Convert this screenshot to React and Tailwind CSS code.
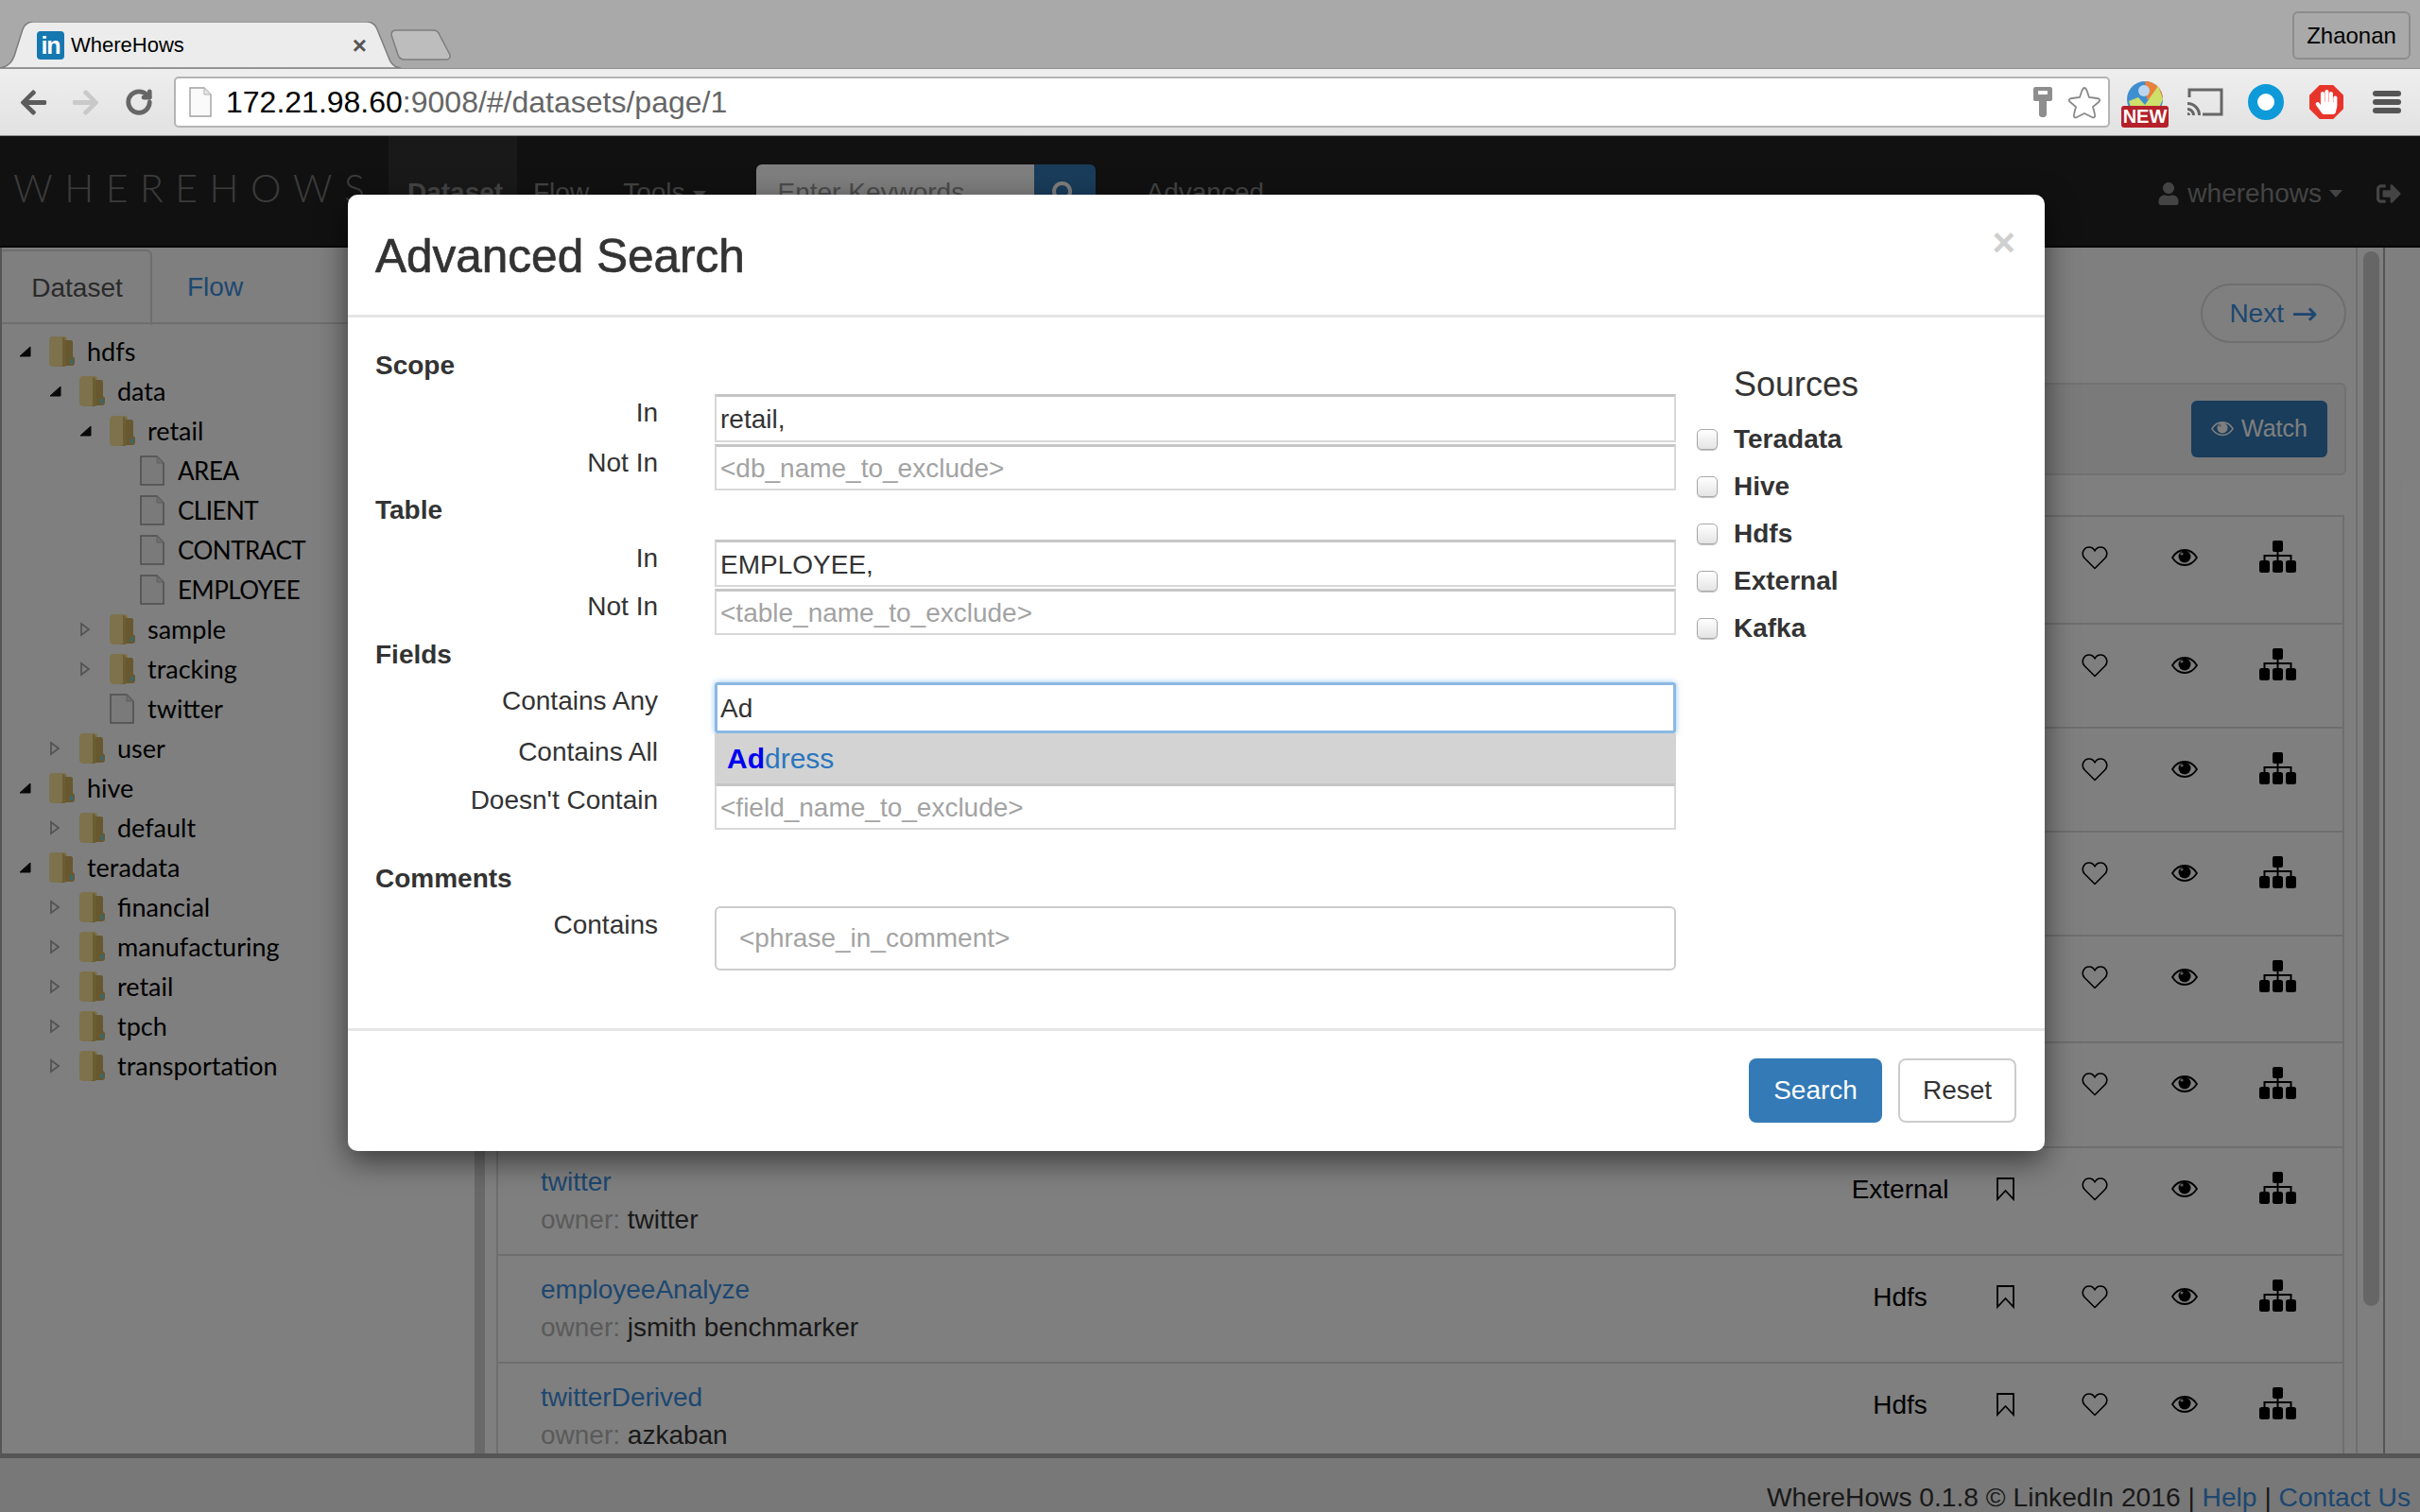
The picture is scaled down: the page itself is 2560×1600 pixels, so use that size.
import React from 'react';
import { RotateCw } from 'lucide-react';
import { FaArrowLeft, FaArrowRight, FaHandPaper, FaSearch, FaSignOutAlt, FaUser } from 'react-icons/fa';

const tree = [
  { level: 0, kind: 'open', name: 'hdfs' },
  { level: 1, kind: 'open', name: 'data' },
  { level: 2, kind: 'open', name: 'retail' },
  { level: 3, kind: 'file', name: 'AREA' },
  { level: 3, kind: 'file', name: 'CLIENT' },
  { level: 3, kind: 'file', name: 'CONTRACT' },
  { level: 3, kind: 'file', name: 'EMPLOYEE' },
  { level: 2, kind: 'closed', name: 'sample' },
  { level: 2, kind: 'closed', name: 'tracking' },
  { level: 2, kind: 'file', name: 'twitter' },
  { level: 1, kind: 'closed', name: 'user' },
  { level: 0, kind: 'open', name: 'hive' },
  { level: 1, kind: 'closed', name: 'default' },
  { level: 0, kind: 'open', name: 'teradata' },
  { level: 1, kind: 'closed', name: 'financial' },
  { level: 1, kind: 'closed', name: 'manufacturing' },
  { level: 1, kind: 'closed', name: 'retail' },
  { level: 1, kind: 'closed', name: 'tpch' },
  { level: 1, kind: 'closed', name: 'transportation' },
];

const rows = [
  { h: 'h-[114px]' },
  { h: 'h-[110px]' },
  { h: 'h-[110px]' },
  { h: 'h-[110px]' },
  { h: 'h-[113px]' },
  { h: 'h-[111px]' },
  { h: 'h-[114px]', name: 'twitter', owner: 'twitter', type: 'External' },
  { h: 'h-[114px]', name: 'employeeAnalyze', owner: 'jsmith benchmarker', type: 'Hdfs' },
  { h: 'h-[114px]', name: 'twitterDerived', owner: 'azkaban', type: 'Hdfs' },
];

const sources = ['Teradata', 'Hive', 'Hdfs', 'External', 'Kafka'];

const Folder = () => (
  <svg width="27" height="32" viewBox="0 0 27 32" className="shrink-0">
    <path d="M4 0h12c2 0 3 1 3 3v26c0 2-1 3-3 3H5c-3 0-5-1-5-4V5c0-3 1-5 4-5z" fill="#fbe499" />
    <path d="M17 4h6c1 0 2 1 2 2v15l2 2v5c0 2-1 3-3 3h-7l-1 1H9c4 0 8-1 8-4z" fill="#cfb161" />
    <path d="M14 1c2 0 3 1 3 3v24c0 2-1 3-3 3z" fill="#d8bc68" />
    <rect x="22" y="24" width="3" height="5" fill="#6fd0dc" />
  </svg>
);

const FileIcon = () => (
  <svg width="26" height="32" viewBox="0 0 26 32" className="shrink-0">
    <path d="M1 1h17l7 7v23H1z" fill="#f4f4f4" stroke="#9a9a9a" strokeWidth="1.5" />
    <path d="M18 1v7h7" fill="#dcdcdc" stroke="#bdbdbd" strokeWidth="1" />
  </svg>
);

const TreeArrow = ({ kind }) => {
  if (kind === 'file') return <span className="w-[32px] shrink-0" />;
  if (kind === 'open') {
    return (
      <svg width="32" height="14" viewBox="0 0 32 14" className="shrink-0">
        <path d="M1 12L12 2v10z" fill="#111" stroke="#111" strokeLinejoin="round" />
      </svg>
    );
  }
  return (
    <svg width="32" height="16" viewBox="0 0 32 16" className="shrink-0">
      <path d="M2 2l8 6-8 6z" fill="none" stroke="#a8a8a8" strokeWidth="1.8" />
    </svg>
  );
};

const Bookmark = () => (
  <svg width="19" height="25" viewBox="0 0 19 25" className="shrink-0">
    <path d="M1 1h17v22l-8.5-9L1 23z" fill="none" stroke="#000" strokeWidth="1.8" />
  </svg>
);

const Heart = () => (
  <svg width="28" height="25" viewBox="0 0 28 25" className="shrink-0">
    <path d="M14 23.5L3 12.5C-1 7.5 2.5 1 8 1c2.8 0 4.8 1.5 6 4 1.2-2.5 3.2-4 6-4 5.500 0 9 6.500 5 11.500z" fill="none" stroke="#000" strokeWidth="1.6" strokeLinejoin="round" />
  </svg>
);

const Eye = ({ color = '#000', size = 28 }) => (
  <svg width={size} height={(size * 18) / 28} viewBox="0 0 28 18" className="shrink-0">
    <path d="M1 9C4.500 3.500 9 1 14 1s9.500 2.500 13 8c-3.500 5.500-8 8-13 8S4.500 14.500 1 9z" fill="none" stroke={color} strokeWidth="1.8" />
    <circle cx="14" cy="8" r="6.500" fill={color} />
    <circle cx="11" cy="5" r="1.600" fill="#bbb" />
  </svg>
);

const Sitemap = () => (
  <svg width="39" height="34" viewBox="0 0 39 34" className="shrink-0">
    <rect x="14" y="0" width="11" height="12" rx="2" />
    <path d="M19.500 10v12M5.500 23v-7h28v7" fill="none" stroke="#000" strokeWidth="2" />
    <rect x="0" y="21" width="11" height="13" rx="2.500" />
    <rect x="14" y="21" width="11" height="13" rx="2.500" />
    <rect x="28" y="21" width="11" height="13" rx="2.500" />
  </svg>
);

const Caret = ({ className }) => <span className={`w-0 h-0 border-x-[7px] border-x-transparent border-t-[8px] ${className}`} />;

const BrowserChrome = () => (
  <div className="shrink-0">
    <div className="h-[72px] bg-[#a9a9a9] flex items-end relative">
      <div className="relative w-[424px] h-[49px] flex items-center pl-[39px] pr-[36px] shrink-0">
        <svg width="424" height="49" viewBox="0 0 424 49" className="absolute left-0 top-0">
          <path d="M0 49C10 47 14 42 17 30L24 8C26 3 29 0 35 0H388C394 0 397 3 399 8L412 40C414 45 417 48 424 49z" fill="#ececec" stroke="#7d7d7d" strokeWidth="1.5" />
        </svg>
        <span className="relative w-[29px] h-[30px] rounded-[4px] bg-[#1578b0] text-white font-bold text-[25px] leading-[30px] text-center tracking-[-1px]">in</span>
        <span className="relative ml-[7px] text-[22px] text-black flex-1">WhereHows</span>
        <span className="relative text-[#555] text-[26px] font-bold leading-none">×</span>
      </div>
      <svg width="66" height="33" viewBox="0 0 66 33" className="-ml-[12px] mb-[8px] shrink-0">
        <path d="M2 6C2 3 4 1 7 1H46C50 1 52 3 53 6L64 27C65 30 63 32 60 32H16C12 32 10 30 9 27z" fill="#bdbdbd" stroke="#7d7d7d" strokeWidth="1.5" />
      </svg>
      <div className="absolute right-[10px] top-[12px] w-[125px] h-[51px] rounded-[6px] border-2 border-[#8c8c8c] flex items-center justify-center text-[24px] text-black">Zhaonan</div>
    </div>
    <div className="h-[72px] bg-gradient-to-b from-[#eeeeee] to-[#e2e2e2] border-y border-[#8f8f8f] flex items-center">
      <FaArrowLeft className="ml-[20px] text-[#5c5c5c] shrink-0" size={31} />
      <FaArrowRight className="ml-[24px] text-[#c9c9c9] shrink-0" size={31} />
      <RotateCw className="ml-[26px] text-[#666] shrink-0" size={30} strokeWidth={3.8} />
      <div className="ml-[22px] w-[2048px] h-[54px] bg-white border-2 border-[#b4b4b4] rounded-[5px] flex items-center shrink-0">
        <svg width="24" height="32" viewBox="0 0 24 32" className="ml-[14px] shrink-0">
          <path d="M1 1h15l7 7v23H1z" fill="#fafafa" stroke="#a0a0a0" strokeWidth="1.400" />
          <path d="M16 1v7h7" fill="#e6e6e6" stroke="#b0b0b0" />
        </svg>
        <span className="ml-[15px] text-[32px] text-black whitespace-nowrap">172.21.98.60<span className="text-[#666]">:9008/#/datasets/page/1</span></span>
        <svg width="20" height="32" viewBox="0 0 20 32" className="ml-auto shrink-0">
          <path d="M2 0h16c1 0 2 1 2 2v11c0 1-1 2-2 2h-4v15l-2 2H8l-2-2V15H2c-1 0-2-1-2-2V2C0 1 1 0 2 0z" fill="#8e8e8e" />
          <rect x="5" y="4" width="10" height="4" rx="1" fill="#fff" />
        </svg>
        <svg width="36" height="35" viewBox="0 0 36 35" className="ml-[16px] mr-[7px] shrink-0">
          <path d="M18 2c1 0 2 1 3 4l2 6 8 1c4 .5 4 2 2 4l-6 5 2 8c1 3-1 4-3 3l-8-4-8 4c-2 1-4 0-3-3l2-8-6-5c-2-2-2-3.500 2-4l8-1 2-6c1-3 2-4 3-4z" fill="#fff" stroke="#8a8a8a" strokeWidth="1.800" />
        </svg>
      </div>
      <div className="relative ml-[12px] w-[50px] h-[48px] shrink-0 mt-[6px]">
        <svg width="40" height="40" viewBox="0 0 40 40" className="absolute left-[5px] -top-[2px]">
          <circle cx="20" cy="20" r="19" fill="#3f8fd0" />
          <path d="M20 1a19 19 0 0 1 19 19H22z" fill="#e8813a" />
          <path d="M3 22l10-4 7 8 14-20 5 14-8 18H8z" fill="#cfe06a" />
          <circle cx="19" cy="11" r="6" fill="#bcd6f0" />
        </svg>
        <span className="absolute left-0 bottom-0 w-[50px] h-[23px] rounded-[3px] bg-[#b5202a] text-white font-bold text-[20px] leading-[23px] text-center">NEW</span>
      </div>
      <svg width="38" height="30" viewBox="0 0 38 30" className="ml-[20px] shrink-0">
        <path d="M2 10V2h34v26H16" fill="none" stroke="#666" strokeWidth="3" />
        <path d="M0 15a14 14 0 0 1 14 14h-3A11 11 0 0 0 0 18zM0 21a8 8 0 0 1 8 8H5a5 5 0 0 0-5-5zM0 26a3 3 0 0 1 3 3H0z" fill="#666" />
      </svg>
      <span className="ml-[26px] w-[38px] h-[38px] rounded-full border-[10px] border-[#0e9ad8] bg-white shrink-0" />
      <span className="ml-[27px] w-[36px] h-[36px] bg-[#e8352c] flex items-center justify-center shrink-0 [clip-path:polygon(30%_0,70%_0,100%_30%,100%_70%,70%_100%,30%_100%,0_70%,0_30%)]">
        <FaHandPaper className="text-white" size={26} />
      </span>
      <div className="ml-[31px] w-[30px] flex flex-col gap-[3px] shrink-0">
        <span className="h-[6px] rounded-[3px] bg-[#555]" />
        <span className="h-[6px] rounded-[3px] bg-[#555]" />
        <span className="h-[6px] rounded-[3px] bg-[#555]" />
      </div>
    </div>
  </div>
);

const Navbar = () => (
  <div className="h-[118px] shrink-0 bg-[#222] border-b-2 border-black flex items-start text-[28px] text-[#888]">
    <span className="ml-[14px] w-[397px] mt-[33px] text-[41px] leading-[44px] tracking-[12.500px] text-[#777] font-light font-['Lato',sans-serif] whitespace-nowrap">WHEREHOWS</span>
    <span className="w-[136px] h-[118px] bg-[#333] pl-[20px] pt-[44px] font-bold leading-[32px]">Dataset</span>
    <span className="ml-[17px] pt-[44px] leading-[32px]">Flow</span>
    <span className="ml-[36px] pt-[44px] leading-[32px] flex items-center gap-[8px]">Tools<Caret className="border-t-[#888] mt-[4px]" /></span>
    <div className="ml-[53px] mt-[30px] flex h-[56px] shrink-0">
      <div className="w-[294px] bg-white rounded-l-[6px] pl-[23px] pt-[14px] leading-[32px] text-[#999]">Enter Keywords</div>
      <div className="w-[65px] bg-[#337ab7] rounded-r-[6px] flex justify-center pt-[18px]">
        <FaSearch className="text-white" size={26} />
      </div>
    </div>
    <span className="ml-[54px] pt-[44px] leading-[32px]">Advanced</span>
    <div className="ml-auto mr-[20px] pt-[45px] flex items-center leading-[32px]">
      <FaUser size={24} />
      <span className="ml-[8px]">wherehows</span>
      <Caret className="ml-[8px] border-t-[#888]" />
      <FaSignOutAlt className="ml-[36px]" size={26} />
    </div>
  </div>
);

const Sidebar = () => (
  <div className="w-[502px] shrink-0 border-l-2 border-[#aaa] bg-white">
    <div className="h-[81px] pt-[2px] flex border-b-2 border-[#ddd] text-[28px]">
      <div className="w-[159px] h-[80px] pl-[2px] border-r-2 border-t-2 border-[#ddd] rounded-tr-[6px] flex items-center justify-center text-[#555]">Dataset</div>
      <div className="ml-[37px] h-[80px] flex items-center text-[#3a8ee0]">Flow</div>
    </div>
    <div className="pt-[8px] pl-[18px]">
      {tree.map((item, i) => (
        <div key={i} className="h-[42px] flex items-center" style={{ marginLeft: item.level * 32 }}>
          <TreeArrow kind={item.kind} />
          {item.kind === 'file' ? <FileIcon /> : <Folder />}
          <span className={`${item.kind === 'file' ? 'ml-[14px]' : 'ml-[13px]'} ${item.level === 3 ? 'text-[26px] tracking-[-0.5px]' : 'text-[27px]'} text-black font-['Lato',sans-serif] whitespace-nowrap`}>{item.name}</span>
        </div>
      ))}
    </div>
  </div>
);

const DatasetRow = ({ row }) => (
  <div className={`${row.h} shrink-0 border-b-2 border-[#ddd] pl-[45px] flex items-start text-[28px]`}>
    <div className="w-[1366px] pt-[18px]">
      <div className="h-[36px] leading-[36px] text-[#3a8ee0]">{row.name}</div>
      <div className="mt-[4px] h-[36px] leading-[36px] text-[#333]">
        {row.owner && <span className="text-[#b4b4b4]">owner: </span>}
        {row.owner}
      </div>
    </div>
    <div className="w-[144px] pt-[26px] leading-[36px] text-center text-black">{row.type}</div>
    <div className="w-[87px] pt-[31px] flex justify-center pr-[8px]"><Bookmark /></div>
    <div className="w-[94px] pt-[31px] flex justify-center"><Heart /></div>
    <div className="w-[96px] pt-[34px] flex justify-center"><Eye /></div>
    <div className="w-[100px] pt-[25px] flex justify-center"><Sitemap /></div>
  </div>
);

const Main = () => (
  <div className="flex-1 flex min-w-0 bg-white">
    <div className="w-[11px] bg-[#d2d2d2] shrink-0" />
    <div className="w-[12px] shrink-0" />
    <div className="w-[1957px] shrink-0 h-full overflow-hidden">
      <div className="pt-[38px] flex justify-end">
        <div className="w-[154px] h-[63px] rounded-full border-2 border-[#ddd] flex items-center justify-center gap-[8px] text-[28px] text-[#3a8ee0]">
          Next<span className="text-[33px] leading-[32px] font-['DejaVu_Sans',sans-serif]">→</span>
        </div>
      </div>
      <div className="mt-[42px] h-[98px] rounded-[6px] border-2 border-[#e3e3e3] bg-[#f5f5f5] flex items-start justify-end pt-[17px] pr-[18px]">
        <div className="w-[144px] h-[60px] rounded-[6px] bg-[#337ab7] flex items-center justify-center gap-[8px] text-[25px] text-white">
          <Eye color="#fff" size={24} />
          Watch
        </div>
      </div>
      <div className="mt-[42px] mr-[2px] border-x-2 border-t-2 border-[#ddd] flex flex-col">
        {rows.map((row, i) => <DatasetRow key={i} row={row} />)}
      </div>
    </div>
    <div className="w-[10px] shrink-0" />
    <div className="w-[31px] shrink-0 border-l-2 border-[#ddd] border-r-2 border-r-[#aaa] pl-[6px] pt-[4px]">
      <div className="w-[17px] h-[1116px] rounded-full bg-[#cdcdcd]" />
    </div>
  </div>
);

const FieldRow = ({ label, height, gap, labelClass, children }) => (
  <div className={`flex ${height} ${gap || ''}`}>
    <div className={`w-[299px] text-right text-[28px] leading-[40px] text-[#333] shrink-0 ${labelClass || ''}`}>{label}</div>
    <div className="ml-[60px] w-[1017px] shrink-0">{children}</div>
  </div>
);

const TextBox = ({ value, placeholder }) => (
  <div className={`h-full border-2 border-[#d8d8d8] border-t-[3px] border-t-[#c6c6c6] pl-[4px] pt-[2px] flex items-center text-[28px] ${value ? 'text-[#333]' : 'text-[#a3a3a3]'}`}>
    {value || placeholder}
  </div>
);

const Heading = ({ className, children }) => (
  <div className={`${className} font-bold text-[28px] text-[#333]`}>{children}</div>
);

const AdvancedSearch = () => (
  <div className="absolute left-[368px] top-[62px] w-[1795px] h-[1012px] bg-white rounded-[10px] shadow-[0_10px_32px_rgba(0,0,0,0.55)] flex flex-col">
    <div className="h-[130px] shrink-0 border-b-[3px] border-[#e5e5e5] pl-[29px] pr-[31px] flex items-start justify-between">
      <span className="mt-[36px] text-[49.500px] leading-[58px] text-[#333] [-webkit-text-stroke:0.7px_#333]">Advanced Search</span>
      <span className="mt-[26px] text-[42px] leading-[50px] font-bold text-[#cfcfcf]">×</span>
    </div>
    <div className="h-[752px] shrink-0 pl-[29px] flex">
      <div className="pt-[31px] w-[1376px] shrink-0">
        <Heading className="h-[50px] leading-[40px]">Scope</Heading>
        <FieldRow label="In" height="h-[51px]"><TextBox value="retail," /></FieldRow>
        <FieldRow label="Not In" height="h-[49px]" gap="mt-[2px]"><TextBox placeholder="<db_name_to_exclude>" /></FieldRow>
        <Heading className="h-[52px] leading-[42px]">Table</Heading>
        <FieldRow label="In" height="h-[50px]"><TextBox value="EMPLOYEE," /></FieldRow>
        <FieldRow label="Not In" height="h-[49px]" gap="mt-[2px]" labelClass="-mt-[1px]"><TextBox placeholder="<table_name_to_exclude>" /></FieldRow>
        <Heading className="h-[50px] leading-[42px]">Fields</Heading>
        <FieldRow label="Contains Any" height="h-[54px]">
          <div className="h-full border-[3px] border-[#8bb8e3] rounded-[3px] shadow-[0_0_6px_rgba(102,175,233,0.7)] pl-[3px] pt-[1px] flex items-center text-[28px] text-[#333]">Ad</div>
        </FieldRow>
        <FieldRow label="Contains All" height="h-[53px]">
          <div className="h-full bg-[#d3d3d3] pl-[13px] flex items-center text-[30px] text-[#2a76bd]"><span className="font-bold text-[#0000f0]">Ad</span>dress</div>
        </FieldRow>
        <FieldRow label="Doesn't Contain" height="h-[49px]" labelClass="-mt-[2px]"><TextBox placeholder="<field_name_to_exclude>" /></FieldRow>
        <Heading className="h-[81px] pt-[31px] leading-[42px]">Comments</Heading>
        <FieldRow label="Contains" height="h-[68px]">
          <div className="h-full border-2 border-[#ccc] rounded-[6px] pl-[24px] flex items-center text-[28px] text-[#a3a3a3]">{'<phrase_in_comment>'}</div>
        </FieldRow>
      </div>
      <div className="w-[340px] pt-[49px] pl-[22px]">
        <div className="pl-[39px] text-[36px] leading-[44px] text-[#333]">Sources</div>
        <div className="mt-[11px]">
          {sources.map((s) => (
            <div key={s} className="h-[50px] flex items-center">
              <span className="w-[22px] h-[22px] rounded-[5px] border border-[#a8a8a8] bg-gradient-to-b from-white to-[#e4e4e4] shadow-[0_1px_1px_rgba(0,0,0,0.25)] shrink-0" />
              <span className="ml-[17px] font-bold text-[28px] text-[#333]">{s}</span>
            </div>
          ))}
        </div>
      </div>
    </div>
    <div className="flex-1 border-t-[3px] border-[#e5e5e5] flex justify-end items-start pt-[29px] pr-[30px] gap-[17px] text-[28px]">
      <div className="w-[141px] h-[68px] rounded-[8px] bg-[#337ab7] text-white flex items-center justify-center">Search</div>
      <div className="w-[125px] h-[68px] rounded-[8px] border-2 border-[#ccc] text-[#333] flex items-center justify-center">Reset</div>
    </div>
  </div>
);

const App = () => (
  <div className="w-[2560px] h-[1600px] overflow-hidden flex flex-col font-['Liberation_Sans',Arial,sans-serif]">
    <BrowserChrome />
    <div className="relative flex-1 flex flex-col min-h-0">
      <Navbar />
      <div className="h-[1276px] shrink-0 flex overflow-hidden">
        <Sidebar />
        <Main />
      </div>
      <div className="flex-1 border-t-[5px] border-[#aaa] bg-[#f0f0f0] flex justify-end pt-[25px] pr-[10px] text-[28.200px] leading-[32px] text-[#333] whitespace-nowrap">
        <span>WhereHows 0.1.8 © LinkedIn 2016 | <span className="text-[#3a8ee0]">Help</span> | <span className="text-[#3a8ee0]">Contact Us</span></span>
      </div>
      <div className="absolute inset-0 bg-black/50" />
      <AdvancedSearch />
    </div>
  </div>
);

export default App;
